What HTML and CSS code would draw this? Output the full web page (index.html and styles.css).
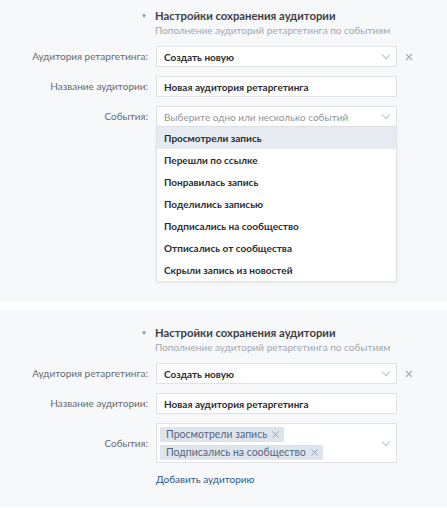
FILE: index.html
```html
<!DOCTYPE html>
<html lang="ru">
<head>
  <meta charset="UTF-8" />
  <title>Настройки сохранения аудитории</title>
  <link rel="stylesheet" href="styles.css">
</head>
<body>
  <div class="panel panel-top">
    <div class="header">
      <span class="arrow">&#9660;</span>
      <div>
        <div class="title">Настройки сохранения аудитории</div>
        <div class="subtitle">Пополнение аудиторий ретаргетинга по событиям</div>
      </div>
    </div>

    <div class="row">
      <label>Аудитория ретаргетинга:</label>
      <div class="field select">
        <span class="value">Создать новую</span>
        <span class="chevron"></span>
      </div>
      <svg class="remove" width="8" height="8" viewBox="0 0 8 8"><path d="M1 1L7 7M7 1L1 7"/></svg>
    </div>

    <div class="row">
      <label>Название аудитории:</label>
      <div class="field">
        <span class="value">Новая аудитория ретаргетинга</span>
      </div>
    </div>

    <div class="row row-top">
      <label>События:</label>
      <div class="combo">
        <div class="field select open">
          <span class="placeholder">Выберите одно или несколько событий</span>
          <span class="chevron"></span>
        </div>
        <ul class="menu">
          <li class="active">Просмотрели запись</li>
          <li>Перешли по ссылке</li>
          <li>Понравилась запись</li>
          <li>Поделились записью</li>
          <li>Подписались на сообщество</li>
          <li>Отписались от сообщества</li>
          <li>Скрыли запись из новостей</li>
        </ul>
      </div>
    </div>
  </div>

  <div class="panel panel-bottom">
    <div class="header">
      <span class="arrow">&#9660;</span>
      <div>
        <div class="title">Настройки сохранения аудитории</div>
        <div class="subtitle">Пополнение аудиторий ретаргетинга по событиям</div>
      </div>
    </div>

    <div class="row">
      <label>Аудитория ретаргетинга:</label>
      <div class="field select">
        <span class="value">Создать новую</span>
        <span class="chevron"></span>
      </div>
      <svg class="remove" width="8" height="8" viewBox="0 0 8 8"><path d="M1 1L7 7M7 1L1 7"/></svg>
    </div>

    <div class="row">
      <label>Название аудитории:</label>
      <div class="field">
        <span class="value">Новая аудитория ретаргетинга</span>
      </div>
    </div>

    <div class="row">
      <label>События:</label>
      <div class="field select tags-field">
        <div class="tags">
          <span class="tag">Просмотрели запись
            <svg width="7" height="7" viewBox="0 0 7 7"><path d="M0.5 0.5L6.5 6.5M6.5 0.5L0.5 6.5"/></svg>
          </span>
          <span class="tag">Подписались на сообщество
            <svg width="7" height="7" viewBox="0 0 7 7"><path d="M0.5 0.5L6.5 6.5M6.5 0.5L0.5 6.5"/></svg>
          </span>
        </div>
        <span class="chevron"></span>
      </div>
    </div>

    <div class="row">
      <label></label>
      <a class="add-link" href="#">Добавить аудиторию</a>
    </div>
  </div>
</body>
</html>
```

FILE: styles.css
```css
* {
  box-sizing: border-box;
}

body {
  margin: 0;
  background: #fff;
  font-family: Lato, 'Liberation Sans', sans-serif;
  font-size: 10px;
  color: #222;
}

.panel {
  background: #f7f8fa;
}

.panel-top {
  padding: 9px 0 20px;
}

.panel-bottom {
  margin-top: 8px;
  padding: 16px 0 21px;
}

.header {
  display: flex;
  margin-left: 141px;
  margin-bottom: 8px;
}

.arrow {
  width: 14px;
  font-size: 6px;
  line-height: 14px;
  color: #828a95;
}

.title {
  font-weight: bold;
  font-size: 11.3px;
  line-height: 14px;
  color: #3c3f44;
}

.subtitle {
  line-height: 15px;
  color: #a2a8b0;
}

.row {
  display: flex;
  align-items: center;
  margin-bottom: 9px;
}

.row-top {
  align-items: flex-start;
}

.row:last-child {
  margin-bottom: 0;
}

.row label {
  width: 156px;
  padding-right: 8px;
  text-align: right;
  line-height: 21px;
  color: #656a70;
}

.field {
  display: flex;
  align-items: center;
  width: 241px;
  height: 21px;
  padding: 0 7px;
  background: #fff;
  border: 1px solid #dfe3e8;
}

.value {
  font-weight: bold;
  color: #2b2d30;
}

.select .chevron {
  margin-left: auto;
  width: 6px;
  height: 6px;
  margin-top: -3px;
  border-right: 1px solid #b8c1cb;
  border-bottom: 1px solid #b8c1cb;
  transform: rotate(45deg);
}

.placeholder {
  color: #8f959c;
}

.remove {
  margin-left: 8px;
  stroke: #a3b0be;
  stroke-width: 1.2;
}

.combo {
  width: 241px;
}

.menu {
  list-style: none;
  margin: 0;
  padding: 0;
  background: #fff;
  border: 1px solid #dfe3e8;
  border-top: none;
  box-shadow: 0 1px 3px rgba(0, 0, 0, 0.08);
}

.menu li {
  height: 22px;
  line-height: 22px;
  padding-left: 7px;
  font-weight: bold;
  color: #2b2d30;
}

.menu li.active {
  background: #e5ebf1;
}

.tags-field {
  height: 40px;
  padding: 2px 7px 2px 3px;
}

.tags {
  display: flex;
  flex-direction: column;
  align-items: flex-start;
  gap: 3px;
}

.tag {
  display: flex;
  align-items: center;
  gap: 5px;
  height: 15px;
  padding: 0 5px 0 6px;
  background: #dde4ec;
  font-size: 10.5px;
  color: #55677d;
}

.tag svg {
  stroke: #8fa1b4;
  stroke-width: 1;
}

.add-link {
  line-height: 14px;
  color: #2a5885;
  text-decoration: none;
}
```
